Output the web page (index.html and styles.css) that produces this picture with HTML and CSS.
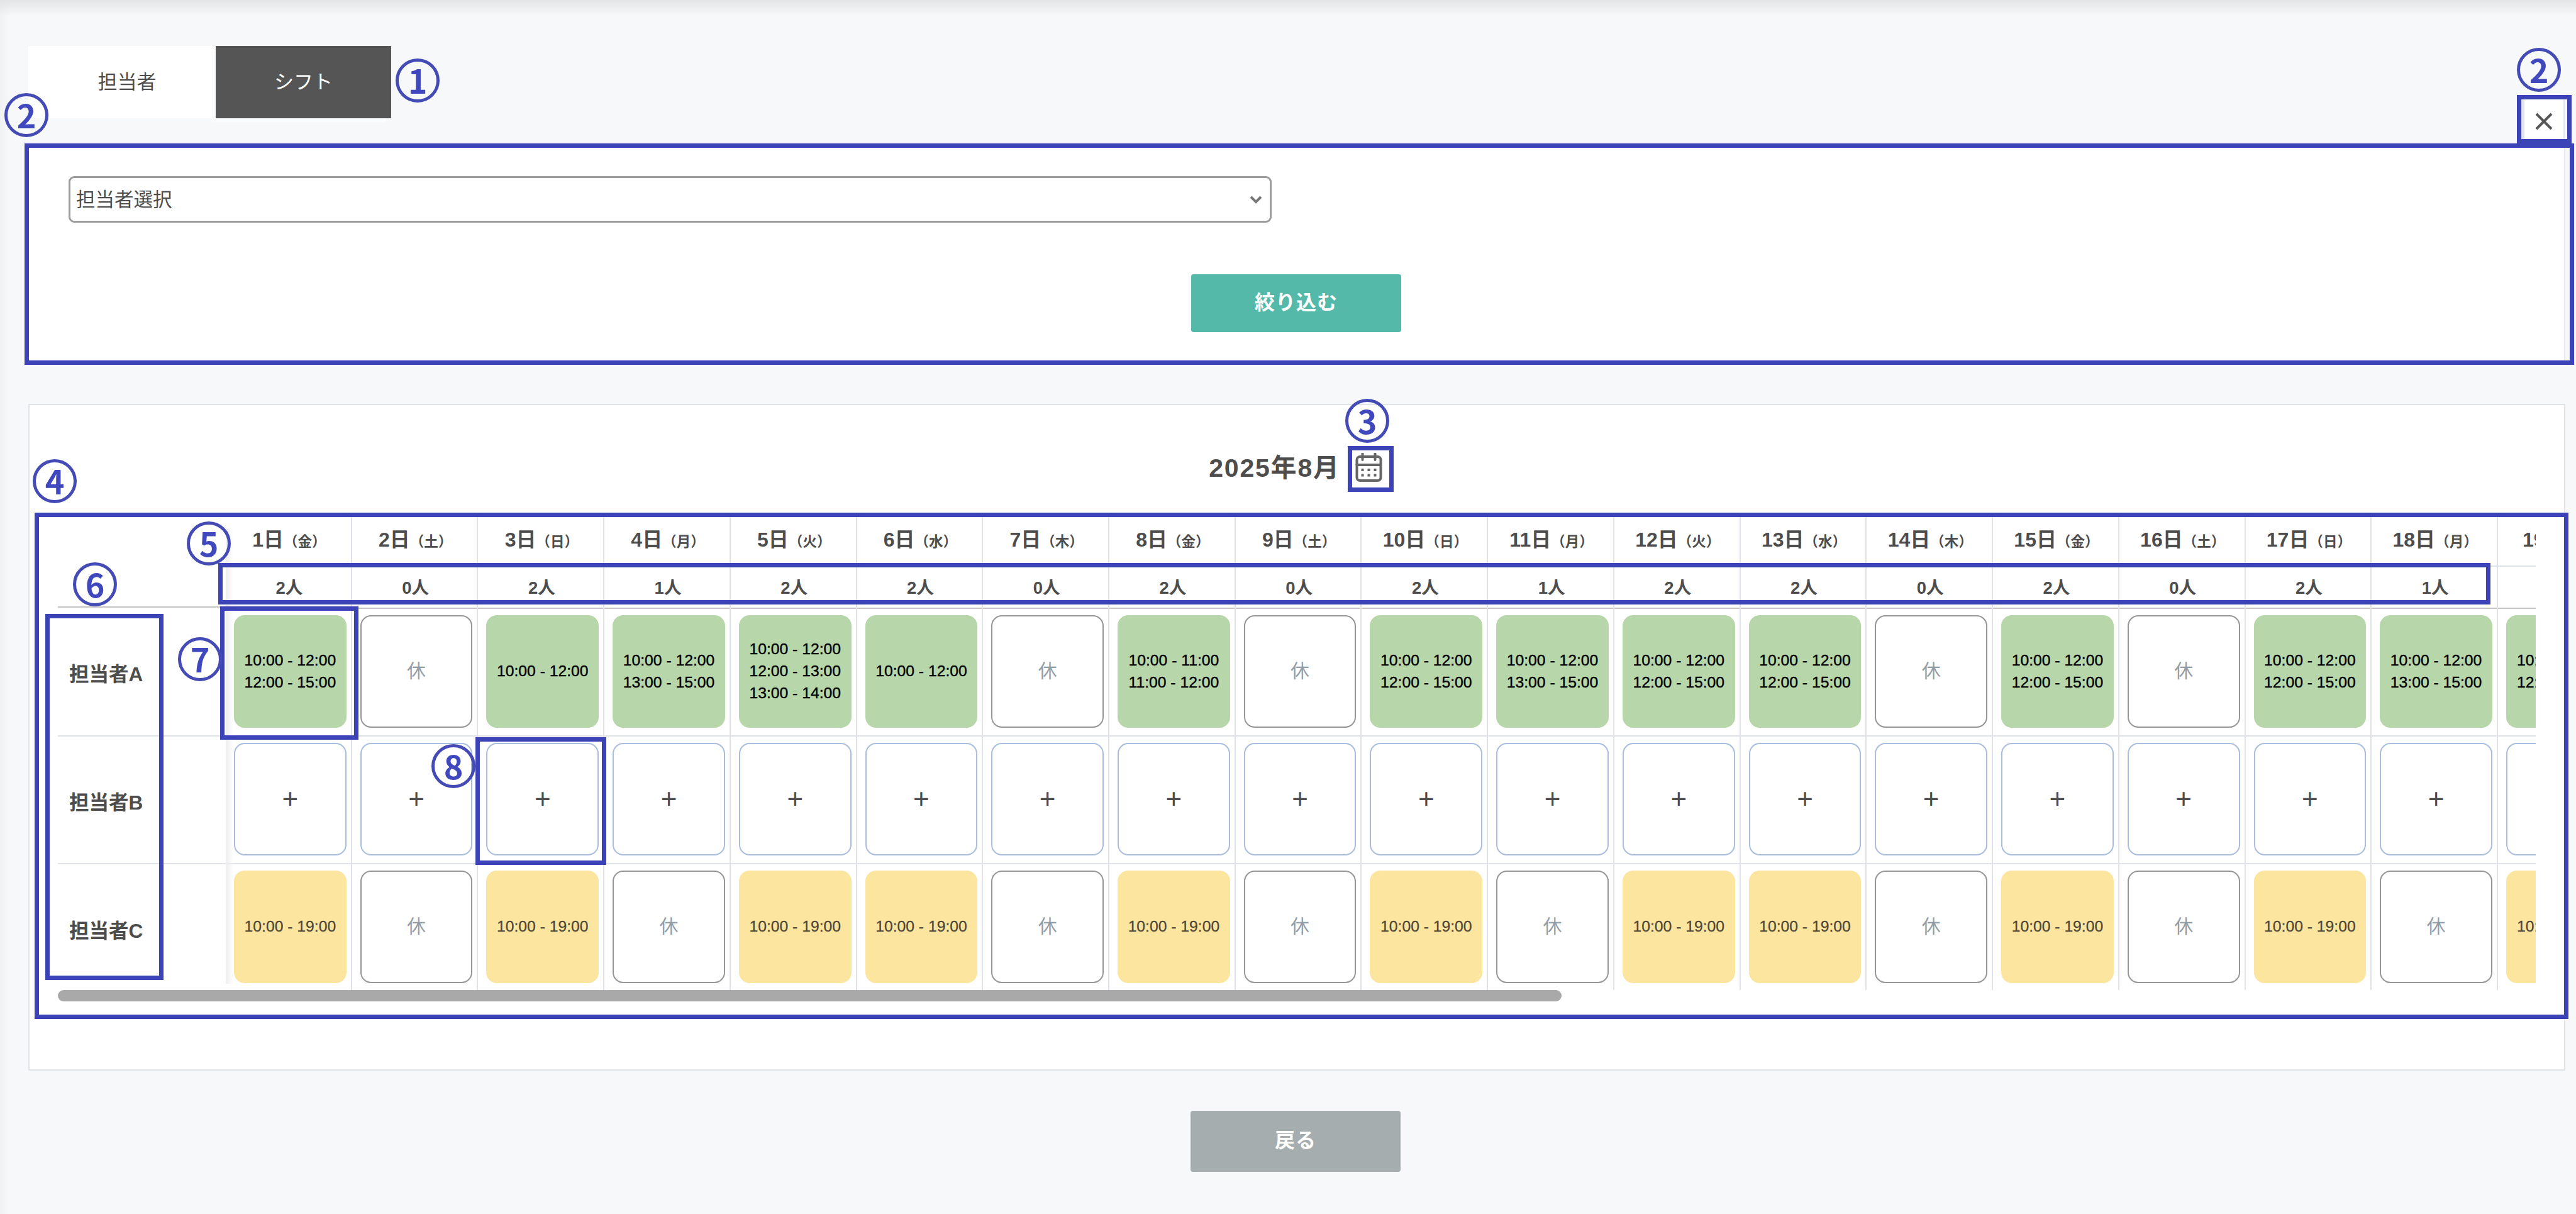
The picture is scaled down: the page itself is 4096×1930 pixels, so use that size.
FILE: index.html
```html
<!DOCTYPE html>
<html lang="ja">
<head>
  <meta charset="UTF-8" />
  <meta name="viewport" content="width=device-width, initial-scale=1.0"/>
  <title>シフト</title>
  <link rel="stylesheet" href="styles.css">
</head>
<body>

  <nav class="tabs">
    <a class="tab">担当者</a>
    <a class="tab tab-active">シフト</a>
  </nav>

  <section class="search">
    <div class="select">
      <span>担当者選択</span>
      <svg class="chevron" viewBox="0 0 20 14"><path d="M2 2l8 8 8-8"/></svg>
    </div>
    <button class="btn btn-search">絞り込む</button>
  </section>

  <section class="panel">
    <div class="month">
      <h1>2025年8月</h1>
      <svg class="calendar" viewBox="0 0 42 46">
        <rect x="2" y="6" width="38" height="38" rx="5"/>
        <path d="M2 19h38M11 1v10M31 1v10"/>
        <path class="dots" d="M9 27h4M19 27h4M29 27h4M9 35.500h4M19 35.500h4M29 35.500h4"/>
      </svg>
    </div>
    <div class="schedule" id="schedule"></div>
    <div class="scrollbar"></div>
  </section>

  <button class="btn btn-back">戻る</button>

  <div class="close-tab">
    <svg viewBox="0 0 28 28"><path d="M2 2l24 24M26 2L2 26"/></svg>
  </div>

  <div class="frame frame-search"></div>
  <div class="frame frame-close"></div>
  <div class="frame frame-calendar"></div>
  <div class="frame frame-schedule"></div>
  <div class="frame frame-count"></div>
  <div class="frame frame-staff"></div>
  <div class="frame frame-shift"></div>
  <div class="frame frame-add"></div>

  <span class="mark mark-tab">1</span>
  <span class="mark mark-search">2</span>
  <span class="mark mark-close">2</span>
  <span class="mark mark-calendar">3</span>
  <span class="mark mark-schedule">4</span>
  <span class="mark mark-count">5</span>
  <span class="mark mark-staff">6</span>
  <span class="mark mark-shift">7</span>
  <span class="mark mark-add">8</span>

  <script>
    const schedule = document.getElementById("schedule");
    const youbi = ["金", "土", "日", "月", "火", "水", "木"];
    const ninzu = [2, 0, 2, 1, 2, 2, 0, 2, 0, 2, 1, 2, 2, 0, 2, 0, 2, 1];

    const a = ["10:00 - 12:00", "12:00 - 15:00"];
    const b = ["10:00 - 12:00", "13:00 - 15:00"];
    const c = ["10:00 - 12:00"];
    const d = ["10:00 - 12:00", "12:00 - 13:00", "13:00 - 14:00"];
    const e = ["10:00 - 11:00", "11:00 - 12:00"];
    const f = ["10:00 - 19:00"];
    const x = null; // 休

    const staff = [
      { nombre: "担当者A", tipo: "green", shifts: [a, x, c, b, d, c, x, e, x, a, b, a, a, x, a, x, a, b] },
      { nombre: "担当者B", tipo: "add", shifts: [] },
      { nombre: "担当者C", tipo: "yellow", shifts: [f, x, f, x, f, f, x, f, x, f, x, f, f, x, f, x, f, x] }
    ];

    function renderCell(s, i) {
      if (s.tipo === "add") return `<div class="cell add">+</div>`;
      const shift = s.shifts[i];
      if (!shift) return `<div class="cell off">休</div>`;
      return `<div class="cell ${s.tipo}">${shift.map(t => `<span>${t}</span>`).join("")}</div>`;
    }

    let html = `<div class="names"><div class="name-head"></div>`;
    staff.forEach(s => {
      html += `<div class="name">${s.nombre}</div>`;
    });
    html += `</div><div class="days">`;
    ninzu.forEach((n, i) => {
      html += `<div class="day">
        <div class="date">${i + 1}日<small>（${youbi[i % 7]}）</small></div>
        <div class="count">${n}人</div>
        ${staff.map(s => `<div class="slot">${renderCell(s, i)}</div>`).join("")}
      </div>`;
    });

    // day 19 is only partly scrolled into view
    html += `<div class="day day-cut">
      <div class="date">19</div>
      <div class="count"></div>
      <div class="slot"><div class="cell green"><span>10:</span><span>12:</span></div></div>
      <div class="slot"><div class="cell add"></div></div>
      <div class="slot"><div class="cell yellow"><span>10:</span></div></div>
    </div>`;
    schedule.innerHTML = html + "</div>";
  </script>
</body>
</html>
```
FILE: styles.css
```css
* {
  box-sizing: border-box;
}

body {
  position: relative;
  margin: 0;
  padding-top: 73px;
  height: 1930px;
  overflow: hidden;
  background: linear-gradient(#e2e4e6, rgba(246,248,250,0) 26px), linear-gradient(90deg, #eff1f3, rgba(246,248,250,0) 16px), #f6f8fa;
  color: #4d4d4d;
  font-family: "Liberation Sans", "Noto Sans CJK JP", sans-serif;
}

.tabs {
  display: flex;
  margin-left: 45px;
  height: 115px;
}

.tab {
  display: flex;
  align-items: center;
  justify-content: center;
  width: 298px;
  padding: 0 0 7px 16px;
  background: #fff;
  box-shadow: inset 34px -7px 0 #fff;
  font-size: 31px;
}

.tab-active {
  width: 279px;
  padding-left: 0;
  background: #555;
  box-shadow: -7px 7px 0 -1px #fafbfc;
  color: #fff;
}

.search {
  margin: 43px 17px 0 46px;
  height: 346px;
  padding: 49px 63px 0;
  background: #fff;
  border-right: 2px solid #e4e8ec;
}

.select {
  display: flex;
  align-items: center;
  justify-content: space-between;
  width: 1913px;
  height: 74px;
  padding: 0 12px 4px 9px;
  border: 3px solid #9c9c9c;
  border-radius: 9px;
  font-size: 30.500px;
}

.chevron {
  width: 20px;
  margin-top: 6px;
  fill: none;
  stroke: #777;
  stroke-width: 4;
}

.btn {
  display: block;
  width: 334px;
  border: none;
  border-radius: 4px;
  padding: 0 0 9px;
  color: #fff;
  font: bold 32px "Noto Sans CJK JP", sans-serif;
  letter-spacing: 1px;
}

.btn-search {
  height: 92px;
  margin: 82px 0 0 1785px;
  background: #54b9a8;
}

.panel {
  margin: 65px 17px 0 45px;
  height: 1060px;
  padding: 0 45px;
  background: #fff;
  border: 2px solid #e0e4e8;
}

.month {
  display: flex;
  align-items: center;
  justify-content: center;
  gap: 24px;
  height: 176px;
  padding: 22px 0 0;
}

.month h1 {
  margin: -6px 0 0;
  font-size: 41px;
  letter-spacing: 1.800px;
}

.calendar {
  width: 43px;
  height: 46px;
  margin-right: 4px;
  fill: none;
  stroke: #666;
  stroke-width: 4;
  stroke-linecap: round;
}

.calendar .dots {
  stroke-linecap: butt;
}

.schedule {
  display: flex;
  height: 754px;
  overflow: hidden;
}

.names {
  position: relative;
  flex: none;
  width: 267px;
}

/* shadow of the fixed column */
.names::after {
  content: "";
  position: absolute;
  left: 100%;
  top: 20px;
  bottom: 10px;
  width: 12px;
  background: linear-gradient(90deg, #eeeeef, rgba(255,255,255,0));
}

.name-head {
  height: 146px;
  border-bottom: 2px solid #c4c4c4;
}

.name {
  display: flex;
  align-items: center;
  height: 203px;
  padding: 2px 0 0 18px;
  border-bottom: 2px solid #dfe2e6;
  font-size: 31.500px;
  font-weight: bold;
}

.name-head + .name {
  height: 205px;
}

.name:last-child {
  border: none;
}

.days {
  display: flex;
  overflow: hidden;
}

.day {
  flex: none;
  width: 200.720px;
  border-right: 2px solid #dfe2e8;
  text-align: center;
}

.date {
  height: 81px;
  padding: 14px 0 0 3px;
  border-bottom: 2px solid #dfe2e6;
  font-size: 32px;
  font-weight: bold;
  line-height: 48px;
  white-space: nowrap;
}

.date small {
  font-size: 22.500px;
}

.count {
  height: 67px;
  padding-left: 3px;
  border-bottom: 2px solid #c4c4c4;
  font-size: 27.500px;
  font-weight: bold;
  line-height: 68px;
}

.slot {
  height: 203px;
  padding: 10px 7px 0 13px;
  border-bottom: 2px solid #dfe2e8;
}

.slot:last-child {
  border: none;
}

.cell {
  display: flex;
  flex-direction: column;
  align-items: center;
  justify-content: center;
  height: 179px;
  border-radius: 17px;
  font-size: 24.700px;
  line-height: 34.700px;
  white-space: nowrap;
}

.green {
  background: #b7d6a9;
  color: #000;
  -webkit-text-stroke: 0.4px #000;
}

.yellow {
  background: #fce59f;
  color: #4f4738;
  -webkit-text-stroke: 0.3px #4f4738;
}

.off {
  border: 2px solid #969696;
  color: #939da6;
  font-size: 30px;
}

.add {
  border: 2px solid #a9bddf;
  font-size: 44px;
}

.day-cut {
  width: 72px;
  border: none;
  text-align: left;
}

.day-cut .date {
  padding-left: 39px;
}

.day-cut .slot {
  padding-right: 0;
}

.day-cut .cell {
  align-items: flex-start;
  padding-left: 17px;
  border-right: none;
  border-radius: 17px 0 0 17px;
}

.scrollbar {
  width: 2391px;
  height: 18px;
  border-radius: 9px;
  background: #a9a9a9;
}

.btn-back {
  height: 97px;
  margin: 64px 0 0 1893px;
  background: #a5adae;
}

.close-tab {
  position: absolute;
  left: 4008px;
  top: 158px;
  width: 70px;
  height: 72px;
  padding: 21px 0 0 17px;
  background: #fff;
  border: solid #e0e6f0;
  border-width: 0 2px 0 6px;
}

.close-tab svg {
  width: 28px;
  fill: none;
  stroke: #555;
  stroke-width: 4;
}

/* numbered notes over the page */
.frame {
  position: absolute;
  border: 7px solid #3c43b6;
}

.frame-search { left: 39px; top: 228px; width: 4054px; height: 352px; }
.frame-close { left: 4002px; top: 151px; width: 87px; height: 77px; }
.frame-calendar { left: 2143px; top: 709px; width: 73px; height: 73px; }
.frame-schedule { left: 55px; top: 815px; width: 4029px; height: 805px; }
.frame-count { left: 347px; top: 895px; width: 3613px; height: 66px; }
.frame-staff { left: 72px; top: 976px; width: 188px; height: 582px; }
.frame-shift { left: 350px; top: 964px; width: 220px; height: 212px; }
.frame-add { left: 756px; top: 1172px; width: 208px; height: 203px; }

.mark {
  position: absolute;
  width: 70px;
  height: 70px;
  margin: -35px 0 0 -35px;
  border: 5px solid #444bb4;
  border-radius: 50%;
  color: #4048be;
  font: bold 52px/58px "Noto Sans CJK JP", sans-serif;
  text-align: center;
}

.mark-tab { left: 664px; top: 128px; }
.mark-search { left: 42px; top: 183px; }
.mark-close { left: 4037px; top: 111px; }
.mark-calendar { left: 2174px; top: 669px; }
.mark-schedule { left: 87px; top: 765px; }
.mark-count { left: 332px; top: 864px; }
.mark-staff { left: 151px; top: 929px; }
.mark-shift { left: 318px; top: 1048px; }
.mark-add { left: 721px; top: 1218px; }
```
